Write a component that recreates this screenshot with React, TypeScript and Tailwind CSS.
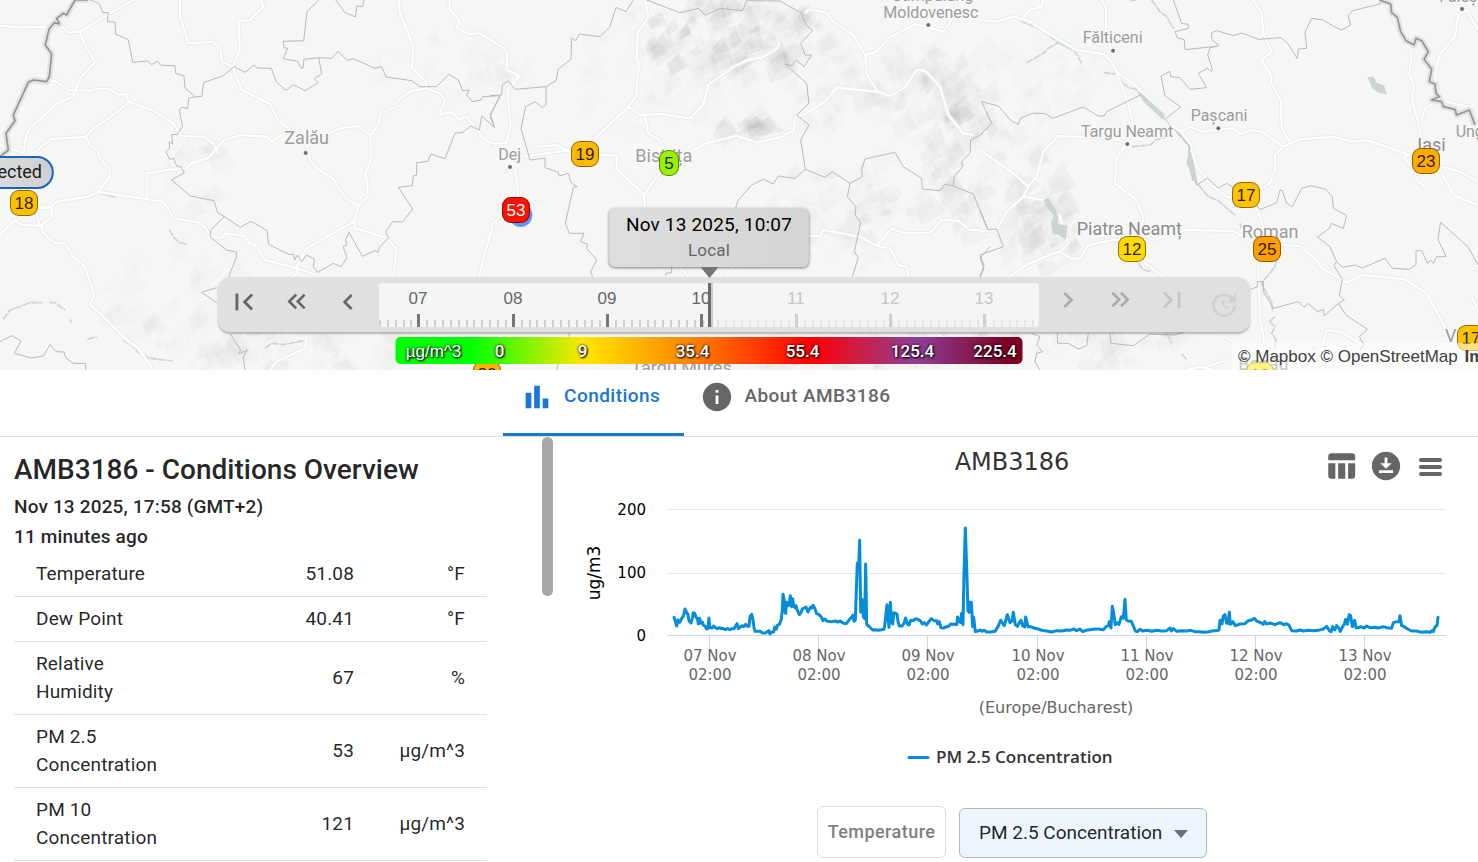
import React, { useState } from "react";
import {
  MdChevronLeft,
  MdChevronRight,
  MdDownloadForOffline,
  MdFirstPage,
  MdInfo,
  MdKeyboardDoubleArrowLeft,
  MdKeyboardDoubleArrowRight,
  MdLastPage,
  MdTableChart,
  MdUpdate,
} from "react-icons/md";

const MAP_W = 1478;

// Map tiles use three units per pixel, each tile is 1470 units wide
const TILES = [
  {
    x: 0,
    roads: [
      "M0 78L60 82 148 80 180 75 205 98 240 94 300 58 400 0",
      "M240 94L252 130 285 185 240 235 218 290 170 312 100 375 80 400 70 460 0 435",
      "M145 245L165 243 205 270 270 272 290 266 330 268 355 285 378 282 385 305 455 330 520 370 545 408 610 410 640 430 655 462",
      "M385 308L340 345 280 385 258 410 155 417 100 460",
      "M258 410L270 435 293 452 300 475 330 510 330 530 295 575 262 590 170 605 155 620 120 620",
      "M295 575L440 598 490 605 522 655 600 668 640 710 665 715 675 700 735 708 750 732 765 735 795 780 893 805 950 825",
      "M440 598L440 520 500 510 560 505 570 492 625 474 670 422 720 405 800 410 815 425 870 390",
      "M540 0L540 45 565 130 640 125 662 150 665 185 698 200 720 150 715 62 750 60 790 20 785 0",
      "M698 200L725 270 810 312 835 360 920 430 930 480 945 500 965 515 1000 535 1020 570 1040 595 1075 618 1105 588 1097 515 1112 485 1112 405 1070 378 1020 385 970 408",
      "M1112 405L1135 375 1140 340 1185 322 1190 303 1235 272 1280 265 1320 280 1335 300 1318 345 1355 335 1378 358 1400 350 1450 415 1490 440",
      "M1195 0L1200 40 1240 140 1236 205 1278 245 1280 265",
      "M1348 0L1350 30 1378 60 1370 85 1410 103 1440 100 1500 138",
      "M1075 618L1062 665 1065 685 1160 713 1190 748 1180 830",
      "M1062 665L920 745 890 800 892 820 870 835",
      "M0 705L45 660 65 675 125 678 130 700 165 730 195 730 220 770 255 800 283 885 270 915 300 940 380 1020 415 1045 460 1110",
      "M120 625L155 625 155 650 120 680 105 625",
      "M1500 665L1480 672 1452 770 1435 840",
      "M920 1010L915 1045 830 1085 810 1110",
    ],
    borders: [
      "M270 0L297 10 308 37 325 38 322 65 345 66 347 103 385 119 398 187 443 183 455 194 472 184 483 196 525 197 527 220 552 228 555 264 586 290 566 295 563 325 545 322 538 332 548 380 532 403 515 404 518 432 507 425 509 445 498 455 508 477 522 476 530 498 543 500 553 519 514 540 572 588 642 602 653 638 673 650 721 682 753 664 782 680 801 692 806 733 868 764 880 762 884 780 892 765 905 785 920 765 943 777 940 800 953 817 1000 790 1023 800 1041 773 1029 740 1040 735 1037 718 1047 697 1087 769 1125 752 1133 757 1140 740 1165 714 1157 695 1178 665 1208 666 1238 627 1195 562 1237 557 1240 527 1250 525 1250 488 1283 484 1293 462 1335 476 1365 400 1388 397 1413 378 1438 390 1445 348 1483 382 1472 345 1500 287",
      "M586 290L605 290 611 248 670 227 703 200 735 217 763 195 770 204 814 205 829 246 858 271 880 254 915 272 955 248 943 235 965 222 956 173 912 178 909 205 902 203 893 184 849 176 863 145 852 143 849 124 911 122 921 36 955 0",
      "M956 173L995 175 1014 154 1042 181 1060 176 1125 205 1145 200 1158 231 1235 242 1260 260 1309 260 1347 223 1375 240 1388 272 1408 270 1400 285 1418 305 1443 300 1448 290 1500 287",
      "M1007 0L1035 38 1067 51 1070 18 1088 20 1092 0",
      "M673 650L632 690 632 713 680 750 710 756 708 775 685 832",
      "M650 863L605 877 650 908",
      "M690 1000L722 1050 716 1062 742 1050 730 1070 735 1110",
      "M0 1025L35 1007 63 1023 43 1060 95 1074 130 1068 150 1034 168 1055 192 1056 197 1073 220 1090 257 1090 257 1110",
    ],
    country: "M265 0L225 0 200 45 190 40 170 55 178 72 163 68 147 88 136 135 155 162 148 230 140 245 100 240 85 247 40 345 45 362 18 400 25 450 0 470",
    water: [
      "M10 958L30 930 60 920 90 908 128 908M148 908L165 908 195 930M210 958L214 968",
      "M508 688L520 710 538 728 563 733",
      "M368 1020L400 1040 415 1058 450 1075 518 1083",
      "M262 1018L290 1010M795 1045L815 1030 850 1034 920 1020",
      "M298 580L348 592",
    ],
    labels: [{ text: "Zalău", x: 853, y: 433 }],
    dots: [[917, 459]],
  },
  {
    x: 1470,
    roads: [
      "M0 118L50 150 52 210 88 228 52 270 62 370 50 430 0 430",
      "M465 0L475 50 443 100 440 180 447 190 438 290 415 320 450 345 510 342 600 355 640 315 655 255 735 198 780 178 815 173 862 145 868 125",
      "M415 320L320 410 300 440 100 470M150 440L200 435 250 460 380 467 380 505 462 585 465 630M462 585L500 530 550 480 650 430 740 407 800 428 870 412 912 392 915 350 945 343 1005 305 1040 263 1165 275 1200 288 1245 262 1280 210 1305 212 1350 260 1375 345 1420 400 1450 405",
      "M465 345L475 400 510 420 525 460",
      "M945 40L955 28 1010 38 1030 65 1090 105 1125 165 1160 155 1195 115 1275 72 1360 95 1385 60 1400 20",
      "M1125 165L1130 220 1165 280",
      "M955 708L990 708 1000 690 1110 710 1160 738 1205 685 1245 700 1320 698 1355 660 1405 662 1440 690 1470 690",
      "M1160 738L1200 745 1225 795 1250 800 1255 830",
      "M75 500L85 590M0 680L20 660 60 620",
      "M565 795L595 830M730 795L705 832M450 1000L465 1010M640 1010L652 1000",
      "M1200 1010L1130 1040M1340 1000L1370 1020",
    ],
    borders: [
      "M430 0L408 35 378 22 360 80 330 110 268 102 258 122 245 114 243 178 205 207 198 242 168 260 168 315 157 323 136 305 107 320 93 385 120 480 165 474 165 503 205 517 207 528 235 520 243 548 262 560 250 562 226 670 238 700 282 700 272 725 293 733 290 745 320 780 302 815 308 830",
      "M168 260L75 268 55 243 37 254 35 285 0 287",
      "M0 350L14 382M0 345L30 290",
      "M470 0L570 38 625 25 646 46 690 25 758 32 770 2 870 3 935 40 948 75 968 92 932 130 945 165 965 165 942 200 918 180 905 197 885 192 950 250 957 310 920 345 957 375 932 420 946 508 915 535 865 528 850 552 820 538 785 555 743 603 737 625",
      "M946 508L1005 532 1027 515 1080 550 1072 590 1098 620 1095 645 1112 667 1093 755 1105 773 1087 830",
      "M1080 550L1117 530 1115 508 1125 477 1215 457 1240 500 1295 535 1297 567 1350 572 1365 552 1390 558 1450 582 1495 695",
      "M1390 558L1393 530 1418 500 1415 485 1440 460 1442 420 1480 400M1500 740L1470 775 1482 805 1470 832",
      "M545 800L545 818 528 820 528 830M240 998L235 1010M200 1110L205 1090",
    ],
    country: "",
    water: ["M1188 283L1200 283"],
    labels: [
      { text: "Dej", x: 25, y: 480, small: true },
      { text: "Bistrița", x: 436, y: 487 },
      { text: "Moldovenesc", x: 1180, y: 54, small: true },
      { text: "Câmpulung", x: 1205, y: 2, small: true },
      { text: "Târgu Mureș", x: 424, y: 1122 },
    ],
    dots: [[60, 501], [1315, 75]],
  },
  {
    x: 2940,
    roads: [
      "M0 60L50 65 100 50 150 65 205 100 290 150 370 162 395 185 410 215 470 260 520 310 560 365 605 395 630 430 650 500 700 560 740 590 800 600 830 625 850 680 835 800 840 950 855 1040",
      "M130 55L145 30 185 20 190 0M365 0L378 25 378 95 398 165",
      "M410 220L435 285 450 330 460 380 440 430 410 475 405 550 470 600 490 650 485 700 520 720 620 690 760 693 830 730 960 738 1010 780 1020 800 1100 848 1150 825 1275 838 1340 880 1400 990",
      "M440 430L400 415 235 408 190 455 170 530 145 560 100 520 0 450M145 560L130 590 80 635 50 690 0 695",
      "M130 590L190 600 240 650 255 700 265 730 240 755 275 777 300 775 325 735 400 720 470 722",
      "M240 755L200 768 130 800 90 830M470 770L550 832",
      "M605 395L630 380 665 395 760 385 780 402 815 390 845 395 910 440 960 418 1060 410 1120 425 1160 420 1290 465",
      "M820 0L845 40 850 100 875 155 845 180 875 230 872 245 902 300 905 380 920 410 932 430",
      "M910 440L885 465 885 510 870 550 835 570 810 600",
      "M1215 0L1270 120 1295 155 1288 220 1302 260 1296 300 1320 390 1325 430M1325 360L1335 325 1380 300 1465 320",
      "M1380 300L1365 220 1378 165 1425 110 1435 45 1460 30 1494 90",
      "M1290 465L1270 470 1305 515 1308 540 1335 560M1385 500L1440 515 1494 545M1385 520L1420 585 1494 615",
      "M620 1110L660 1100 700 1110M680 1100L740 1080M730 1010L760 1025M960 1090L1030 1030 1040 990 1080 995 1160 1040M1475 890L1494 930",
    ],
    borders: [
      "M0 405L35 370 5 305 55 318 95 364 115 373 122 354 157 340 193 340 218 355 310 321 355 348 373 348 380 335 480 285 555 358 602 321 555 287 543 228 570 214 572 230 600 233 630 268 680 263 655 220 682 205 695 215 697 207 683 165 690 143 717 137 695 118 695 98 710 92 760 107 785 99 835 118 903 113 925 132 928 137 952 176 955 147 980 145 975 97 995 55 1030 60 1057 77 1085 90 1112 75 1104 47 1118 32 1207 10",
      "M580 0L605 70 625 73 625 85 585 95 592 114 613 119 615 149 710 139",
      "M555 358L630 440 622 490 650 555 682 535 715 565 740 550 760 562 842 628 890 608 900 570 907 572 920 610 937 620 965 565 992 557 1038 568 1057 590 1060 625 1100 646 1090 685 1055 670 1048 685 1012 711 1050 740 1070 785 1087 802 1125 795 1147 804 1215 775 1237 805 1287 808 1308 795 1308 752 1325 752 1343 790 1352 780 1360 790 1370 770 1398 770 1374 718 1382 667 1465 742 1494 795",
      "M1070 785L1062 797 1087 838 1078 885 1093 900 1075 910 1033 948 1030 928 1012 935 985 910 972 922 955 905 880 925 850 875 850 845 833 845 833 860 812 868",
      "M1075 910L1098 945 1162 988 1138 1010 1152 1035 1140 1050M0 630L25 690 50 687 70 740 0 765 12 795 0 830",
      "M155 1000L180 1010 170 1035 187 1055 170 1060 165 1085 180 1110M232 1000L233 1030 265 1030 295 1047 320 1037 325 1000M390 1000L393 1030 460 1037 510 1002 580 1005 610 998",
    ],
    country: "M1198 0L1232 12 1235 38 1252 52 1262 95 1278 122 1302 135 1308 115 1325 122 1345 155 1332 178 1355 208 1348 245 1365 252 1368 280 1378 290 1355 300 1385 305 1390 320 1425 328 1430 345 1468 330 1485 375",
    water: [
      "M120 62L185 90 235 128 205 145 190 160 140 188M235 128L285 155 305 190M372 218L408 222M412 235L445 262 468 268 500 310 555 358",
      "M592 395L628 440 640 500 648 545 685 590 712 600 768 648M455 440L510 435 530 418 570 408",
      "M515 0L540 35 558 48 582 88M450 2L468 0M475 790L490 810 515 815M780 670L785 685M890 780L885 800 860 830 845 850 860 880 875 905 878 935M885 950L868 965 885 980 875 1000 888 1020 885 1045",
      "M560 1000L575 1030M605 1062L622 1080M1000 1040L1010 1050",
    ],
    labels: [
      { text: "Fălticeni", x: 308, y: 130, small: true },
      { text: "Fălești", x: 1378, y: 5, small: true },
      { text: "Pașcani", x: 632, y: 364, small: true },
      { text: "Targu Neamt", x: 303, y: 411, small: true },
      { text: "Ungheni", x: 1427, y: 411, small: true },
      { text: "Iași", x: 1312, y: 452, strong: true },
      { text: "Piatra Neamț", x: 290, y: 706, strong: true },
      { text: "Roman", x: 785, y: 714 },
      { text: "Vaslui", x: 1395, y: 1025 },
      { text: "Bacău", x: 775, y: 1110, strong: true },
    ],
    dots: [[399, 152], [715, 385], [442, 432], [1446, 27]],
  },
];

// Hilly areas: centre, spread, number of facets, darkness
const HILLS = [
  [2170, 110, 290, 110, 80, 0.026],
  [2300, 260, 420, 130, 60, 0.01],
  [1900, 220, 230, 200, 35, 0.009],
  [2200, 385, 80, 22, 12, 0.026],
  [2500, 650, 230, 160, 60, 0.014],
  [2700, 300, 260, 180, 60, 0.013],
  [2820, 250, 80, 110, 20, 0.022],
  [2950, 560, 230, 210, 70, 0.018],
  [3120, 670, 100, 130, 30, 0.022],
  [3080, 260, 280, 170, 40, 0.009],
  [3100, 1020, 420, 90, 60, 0.016],
  [550, 920, 280, 180, 50, 0.01],
  [900, 1040, 330, 80, 50, 0.014],
  [560, 520, 90, 120, 14, 0.011],
  [1330, 190, 230, 120, 22, 0.01],
  [2500, 1050, 300, 60, 36, 0.018],
];

const seeded = (seed: number) => () => {
  seed = (seed * 16807) % 2147483647;
  return seed / 2147483647;
};

const buildFacets = () => {
  const rand = seeded(4211);
  const facets: { points: string; opacity: number }[] = [];
  HILLS.forEach(([cx, cy, rx, ry, count, dark]) => {
    for (let i = 0; i < count; i++) {
      const angle = rand() * Math.PI * 2;
      const dist = Math.sqrt(rand());
      const x = cx + Math.cos(angle) * rx * dist;
      const y = cy + Math.sin(angle) * ry * dist;
      const size = 28 + rand() * 45;
      const points = [
        [x, y],
        [x + size * 0.7, y - size * (0.2 + rand() * 0.8)],
        [x + size * (0.9 + rand() * 0.5), y + size * 0.2],
        [x + size * 0.2, y + size * (0.3 + rand() * 0.7)],
      ];
      facets.push({
        points: points.map((p) => p.map(Math.round).join(",")).join(" "),
        opacity: dark * (0.5 + rand()),
      });
    }
  });
  return facets;
};

const FACETS = buildFacets();

const PINS = [
  { value: 18, x: 24, y: 203, style: "w-7 bg-[#ffc000] text-black/85" },
  { value: 19, x: 585, y: 154, style: "w-7 bg-[#ffb900] text-black/85" },
  { value: 5, x: 669, y: 163, style: "w-5 bg-[#99f000] text-black/85" },
  { value: 53, x: 516, y: 210, style: "w-7 bg-[#ff1000] text-white" },
  { value: 12, x: 1132, y: 249, style: "w-7 bg-[#ffd900] text-black/85" },
  { value: 17, x: 1246, y: 195, style: "w-7 bg-[#ffc300] text-black/85" },
  { value: 25, x: 1267, y: 249, style: "w-7 bg-[#ffa000] text-black/85" },
  { value: 23, x: 1426, y: 161, style: "w-7 bg-[#ffab00] text-black/85" },
  { value: 17, x: 1471, y: 338, style: "w-7 bg-[#ffc300] text-black/85" },
  { value: 20, x: 487, y: 374, style: "w-7 bg-[#ffb300] text-black/85" },
  { value: 10, x: 1260, y: 375, style: "w-7 bg-[#ffe400] text-black/85" },
];

const LEGEND = [
  { label: "µg/m^3", style: "w-[76px] font-['Liberation_Sans']" },
  { label: "0", style: "w-14" },
  { label: "9", style: "w-[110px]" },
  { label: "35.4", style: "w-[110px]" },
  { label: "55.4", style: "w-[110px]" },
  { label: "125.4", style: "w-[110px]" },
  { label: "225.4", style: "w-[55px]" },
];

const READINGS = [
  { name: "Temperature", value: "51.08", unit: "°F" },
  { name: "Dew Point", value: "40.41", unit: "°F" },
  { name: "Relative Humidity", value: "67", unit: "%" },
  { name: "PM 2.5 Concentration", value: "53", unit: "µg/m^3" },
  { name: "PM 10 Concentration", value: "121", unit: "µg/m^3" },
];

const DAYS = ["07 Nov", "08 Nov", "09 Nov", "10 Nov", "11 Nov", "12 Nov", "13 Nov"];

// PM 2.5 series, drawn at three units per pixel
const SERIES =
  "312,532 316,543 320,558 324,540 329,547 334,538 340,528 345,507 350,518 354,524 357,542 363,549 367,535 370,518 374,520 378,532 382,534 385,552 389,535 393,550 397,546 401,556 405,558 410,567 414,566 417,534 419,562 426,564 431,558 436,563 442,566 448,563 454,566 460,565 465,569 472,566 480,569 486,566 492,566 497,558 501,551 505,566 511,561 516,557 521,560 527,553 532,559 537,559 540,530 545,523 548,534 552,562 555,574 570,574 578,579 586,579 592,575 596,572 600,582 604,577 611,576 614,561 619,567 622,556 629,552 634,538 637,508 639,463 642,475 643,512 647,520 649,486 655,497 658,490 661,467 665,500 668,476 671,498 676,504 678,497 682,511 688,524 693,518 697,507 703,504 708,501 714,516 721,502 725,504 729,496 734,504 740,521 746,523 753,530 759,542 765,537 772,544 785,545 796,543 803,546 811,543 817,548 824,551 830,550 837,540 846,530 849,525 852,544 856,540 859,450 862,370 866,380 869,301 872,516 876,478 880,530 884,536 887,372 890,553 896,558 902,564 908,570 915,569 925,571 935,569 942,568 945,550 948,520 951,494 954,530 957,562 961,487 964,540 968,552 972,518 981,522 984,545 988,558 996,558 1002,550 1007,534 1012,552 1017,555 1022,541 1030,542 1037,536 1045,539 1052,543 1057,552 1063,548 1069,555 1076,546 1084,536 1092,542 1100,542 1103,552 1108,545 1113,563 1120,564 1128,561 1137,558 1142,552 1152,553 1160,554 1163,531 1168,545 1172,548 1175,520 1179,554 1182,400 1186,264 1190,380 1194,512 1197,517 1200,487 1204,487 1208,560 1211,532 1216,575 1224,573 1230,570 1237,574 1242,571 1250,576 1262,576 1275,574 1284,560 1292,541 1303,557 1312,524 1320,548 1326,543 1330,517 1336,554 1342,559 1348,548 1353,541 1358,557 1364,561 1367,531 1374,560 1382,560 1392,564 1405,567 1415,571 1430,573 1445,576 1460,572 1475,573 1490,570 1500,571 1512,567 1520,572 1530,567 1538,575 1548,571 1560,569 1575,567 1586,567 1600,569 1608,560 1615,557 1618,545 1623,564 1627,499 1631,520 1636,554 1642,548 1647,553 1654,530 1660,535 1665,478 1669,540 1674,543 1684,544 1690,558 1696,573 1702,575 1710,568 1718,573 1730,571 1745,574 1760,571 1775,573 1790,572 1800,564 1804,573 1810,566 1820,574 1835,572 1850,573 1862,571 1875,575 1890,575 1900,577 1915,575 1930,572 1940,572 1947,570 1950,541 1956,552 1960,528 1965,524 1970,550 1974,550 1978,517 1981,553 1989,545 1996,557 2010,552 2025,551 2035,542 2045,540 2053,535 2060,543 2070,547 2080,553 2084,545 2090,552 2100,549 2115,554 2130,548 2142,554 2150,551 2157,556 2165,572 2180,573 2190,570 2200,573 2215,571 2230,572 2245,571 2260,567 2270,559 2278,572 2283,575 2288,560 2294,570 2300,557 2307,565 2311,574 2318,560 2323,552 2327,538 2332,553 2338,524 2342,527 2347,560 2354,541 2358,563 2365,563 2372,560 2382,564 2390,558 2400,563 2415,562 2425,564 2440,560 2450,563 2465,565 2470,548 2480,545 2487,545 2490,527 2495,557 2503,560 2513,567 2525,573 2540,573 2555,577 2570,575 2580,577 2587,571 2590,575 2594,563 2601,556 2604,532";

const MapPane = () => (
  <div className="absolute inset-0">
    <svg viewBox="0 0 4434 1110" preserveAspectRatio="none" className="h-full w-full" aria-label="Map">
      <rect width="4434" height="1110" fill="#f6f6f4" />
      {FACETS.map((facet, i) => (
        <polygon key={i} points={facet.points} fill="#000" opacity={facet.opacity} />
      ))}
      {TILES.map((tile) => (
        <g key={tile.x} transform={`translate(${tile.x} 0)`} fill="none" strokeLinejoin="round">
          {tile.water.map((d) => (
            <path key={d} d={d} stroke="#cbd3d5" strokeWidth="5" strokeDasharray="22 3" />
          ))}
          <path d={tile.roads.join("")} stroke="#e9edec" strokeWidth="12" />
          <path d={tile.roads.join("")} stroke="#fff" strokeWidth="6" />
          <path d={tile.borders.join("")} stroke="#b9b9b9" strokeWidth="3" />
          <path d={tile.country} stroke="#e2e2e2" strokeWidth="18" />
          <path d={tile.country} stroke="#949494" strokeWidth="5" />
        </g>
      ))}
      <path d="M4102 232l18-2 10 18 22 8 8 26-22-2-20-14z" fill="#cbd3d5" />
      <path d="M3130 600l15-5 28 45 2 32 28 5-5 42-22-15-18-2-5-35 10-20-25-30z" fill="#cbd3d5" />
      <path d="M3420 275l75 70-6 14-60-55zM3565 440l14 40 12 60-14 4-14-60z" fill="#cbd3d5" />
      {TILES.map((tile) => (
        <g key={tile.x} transform={`translate(${tile.x} 0)`} fontFamily="Roboto, sans-serif">
          {tile.dots.map(([x, y]) => (
            <circle key={x} cx={x} cy={y} r="6" fill="#6f6f6f" />
          ))}
          {tile.labels.map((label) => (
            <text
              key={label.text}
              x={label.x}
              y={label.y}
              fontSize={label.small ? 48 : 54}
              fill={label.strong ? "#8a8a8a" : "#9c9c9c"}
              stroke="#f8f8f8"
              strokeWidth="8"
              paintOrder="stroke"
            >
              {label.text}
            </text>
          ))}
        </g>
      ))}
      <ellipse cx="1562" cy="645" rx="35" ry="36" fill="#6495ff" />
    </svg>
    {PINS.map((pin) => (
      <span
        key={`${pin.value}-${pin.x}`}
        className={`absolute flex h-[26px] -translate-x-1/2 -translate-y-1/2 items-center justify-center rounded-[9px] border border-black/45 font-['Liberation_Sans'] text-[17px] leading-none ${pin.style}`}
        style={{ left: `${(pin.x / MAP_W) * 100}%`, top: pin.y }}
      >
        {pin.value}
      </span>
    ))}
    <button className="absolute left-[54px] top-[156px] h-[33px] -translate-x-full rounded-full border-2 border-[#1565c0] bg-linear-to-r from-[#e2e2e2] to-[#cfcfcf] px-2.5 pb-0.5 text-lg leading-none text-black/90">
      Selected
    </button>
    <div className="absolute bottom-0 right-0 h-[27px] w-[246px] overflow-hidden whitespace-nowrap bg-white/50 pl-1.5 font-['Liberation_Sans'] text-[17px] leading-[27px] text-[#404040]">
      <a href="#mapbox">© Mapbox</a> <a href="#osm">© OpenStreetMap</a>{" "}
      <a href="#improve" className="ml-0.5 font-bold">Improve this map</a>
    </div>
  </div>
);

const HOURS = [
  { label: "07", x: 39 },
  { label: "08", x: 134 },
  { label: "09", x: 228 },
  { label: "10", x: 322 },
  { label: "11", x: 417 },
  { label: "12", x: 511 },
  { label: "13", x: 605 },
];

const Ruler = () => (
  <svg viewBox="0 0 660 44" className="h-11 w-[660px] rounded-sm bg-[#f5f5f5]" aria-hidden="true">
    {Array.from({ length: 84 }, (_, i) => Math.round(i * 7.87)).map((x) => (
      <rect key={x} x={x} y="37" width="2" height="7" fill={x < 330 ? "#d0d0d0" : "#e6e6e6"} />
    ))}
    {HOURS.map((hour) => (
      <g key={hour.label} fill={hour.x < 330 ? "#666" : "#c6c6c6"}>
        <rect x={hour.x - 1} y="31" width="3" height="13" fill={hour.x < 330 ? "#777" : "#d0d0d0"} />
        <text x={hour.x} y="21" textAnchor="middle" fontSize="17" fontFamily="Liberation Sans, sans-serif">
          {hour.label}
        </text>
      </g>
    ))}
    <rect x="330" y="0" width="8" height="36" fill="#f5f5f5" />
    <rect x="331" y="0" width="3" height="44" fill="#ccc" />
    <rect x="329" y="0" width="3" height="44" fill="#6b6b6b" />
  </svg>
);

const stepButton = "flex h-11 w-[52px] cursor-pointer items-center justify-center";

const Timeline = () => (
  <div className="absolute inset-x-0 bottom-[38px] flex justify-center pr-2.5">
    <div className="flex h-[55px] items-center rounded-xl bg-[#e0e0e0] shadow-[0_2px_2px_rgba(0,0,0,0.25)]">
      <div className="flex w-[161px] pb-1.5 text-[#666]">
        <button aria-label="First" className={stepButton}><MdFirstPage size={34} /></button>
        <button aria-label="Back one day" className={stepButton}><MdKeyboardDoubleArrowLeft size={31} /></button>
        <button aria-label="Back one hour" className={stepButton}><MdChevronLeft size={32} /></button>
      </div>
      <div className="relative">
        <Ruler />
        <div className="absolute bottom-full left-1/2 flex -translate-x-1/2 flex-col items-center pb-[5px]">
          <div className="w-[199px] rounded-md bg-linear-to-r from-[#dedede] to-[#d4d4d4] py-1 text-center shadow-[0_1px_3px_rgba(0,0,0,0.5)]">
            <p className="text-[19px] leading-[26px] tracking-[0.01em] text-black">Nov 13 2025, 10:07</p>
            <p className="text-[17px] leading-[25px] tracking-[0.01em] text-[#666]">Local</p>
          </div>
          <svg viewBox="0 0 18 11" className="h-[11px] w-[18px]" aria-hidden="true">
            <path d="M0 0h18L9 11z" fill="#757575" />
          </svg>
        </div>
        <div className="absolute left-1/2 top-full -translate-x-1/2 pt-2.5">
          <div className="flex h-[27px] items-center rounded-[5px] bg-[linear-gradient(90deg,#00ff00_0%,#00ff00_12%,#ffe600_30%,#ff7e00_48%,#ff0000_66%,#8f3f97_83%,#7e0023_98%)] pt-[3px] text-center text-[17px] font-medium leading-none text-white [text-shadow:0_0_3px_#000,1px_1px_2px_#000]">
            {LEGEND.map((stop) => (
              <span key={stop.label} className={stop.style}>{stop.label}</span>
            ))}
          </div>
        </div>
      </div>
      <div className="flex w-[211px] pb-2.5 pl-[3px] text-[#a9a9a9]">
        <button aria-label="Forward one hour" className={stepButton}><MdChevronRight size={32} /></button>
        <button aria-label="Forward one day" className={stepButton}><MdKeyboardDoubleArrowRight size={31} /></button>
        <button aria-label="Last" disabled className={`${stepButton} text-[#c6c6c6]`}><MdLastPage size={34} /></button>
        <button aria-label="Now" disabled className={`${stepButton} pt-2.5 text-[#d0d0d0]`}><MdUpdate size={32} /></button>
      </div>
    </div>
  </div>
);

const Tabs = () => (
  <nav className="flex h-[67px] items-stretch border-b border-[#e0e0e0] pl-[503px] text-[19px] font-medium tracking-wide">
    <button className="flex items-center gap-2.5 border-b-3 border-[#1976d2] pb-2.5 pl-[17px] pr-6 text-[#1976d2]">
      <svg viewBox="0 0 24 24" className="size-[34px]" fill="currentColor" aria-hidden="true">
        <path d="M4 9h4v11H4zM16 13h4v7h-4zM10 4h4v16h-4z" />
      </svg>
      Conditions
    </button>
    <button className="flex items-center gap-2.5 border-b-3 border-transparent pb-2.5 pl-4 pr-5 text-[#666]">
      <MdInfo size={34} />
      About AMB3186
    </button>
  </nav>
);

const Overview = () => (
  <section className="relative w-[553px] shrink-0 pl-3.5 pr-[66px] pt-[15px] tracking-[0.01em] text-black/87">
    <h2 className="text-[28px] font-medium leading-9 tracking-normal">AMB3186 - Conditions Overview</h2>
    <p className="mt-1 text-[19px] font-medium leading-[30px]">Nov 13 2025, 17:58 (GMT+2)</p>
    <p className="text-[19px] font-medium leading-[30px]">11 minutes ago</p>
    <table className="w-full table-fixed text-[19px] leading-7">
      <tbody>
        {READINGS.map((reading) => (
          <tr key={reading.name} className="border-b border-[#e0e0e0]">
            <th scope="row" className="w-[155px] py-2 pl-[22px] text-left font-normal">{reading.name}</th>
            <td className="py-2 pr-[22px] text-right">{reading.value}</td>
            <td className="w-[111px] py-2 pr-[22px] text-right">{reading.unit}</td>
          </tr>
        ))}
      </tbody>
    </table>
    <div className="absolute right-0 top-0 h-[159px] w-[11px] rounded-full bg-[#a8a8a8]" />
  </section>
);

const Chart = () => (
  <svg viewBox="0 0 898 345" className="block w-full" fontFamily="DejaVu Sans, sans-serif" role="img" aria-label="AMB3186 PM 2.5 Concentration">
    <text x="449" y="33" textAnchor="middle" fontSize="24" fill="#333">AMB3186</text>
    <path d="M104 72.5H883M104 136.5H883" stroke="#e6e6e6" />
    <path d="M104 198.5H883" stroke="#ccd6eb" />
    {["200", "100", "0"].map((label, i) => (
      <text key={label} x="83" y={78 + i * 63} textAnchor="end" fontSize="15" fill="#000">{label}</text>
    ))}
    <text transform="translate(37 136) rotate(-90)" textAnchor="middle" fontSize="17" fill="#000">ug/m3</text>
    {DAYS.map((day, i) => {
      const x = 147 + Math.round(i * 109.2);
      return (
        <g key={day} textAnchor="middle" fontSize="15" fill="#666">
          <path d={`M${x - 0.5} 199v13`} stroke="#ccd6eb" />
          <text x={x} y="224">{day}</text>
          <text x={x} y="243">02:00</text>
        </g>
      );
    })}
    <g transform="translate(7 3) scale(0.33333)">
      <polyline points={SERIES} fill="none" stroke="#058dd9" strokeWidth="9" strokeLinejoin="round" strokeLinecap="round" />
    </g>
    <text x="493" y="276" textAnchor="middle" fontSize="16" fill="#666">(Europe/Bucharest)</text>
    <path d="M346 320.5h19" stroke="#058dd9" strokeWidth="3" strokeLinecap="round" />
    <text x="373" y="326" fontSize="17" fontWeight="600" fontFamily="Open Sans, sans-serif" fill="#333">PM 2.5 Concentration</text>
  </svg>
);

const App: React.FC = () => {
  const [metric, setMetric] = useState("PM 2.5 Concentration");

  return (
    <div className="min-h-screen w-full overflow-hidden bg-white font-['Roboto',sans-serif]">
      {/* Map with time slider */}
      <div className="relative h-[370px] w-full overflow-hidden">
        <MapPane />
        <Timeline />
      </div>

      <Tabs />

      <main className="flex">
        <Overview />

        {/* Chart panel */}
        <section className="relative min-w-0 flex-1 pl-2.5 pr-[17px]">
          <Chart />
          <div className="absolute right-[30px] top-3 flex items-center gap-[11px] text-[#666]">
            <button aria-label="Table view"><MdTableChart size={34} /></button>
            <button aria-label="Download"><MdDownloadForOffline size={34} /></button>
            <button aria-label="Chart menu">
              <svg viewBox="0 0 34 34" className="size-[34px]" aria-hidden="true">
                <path d="M7 11h19M7 18h19M7 25h19" stroke="currentColor" strokeWidth="4" strokeLinecap="round" />
              </svg>
            </button>
          </div>
          <div className="flex items-end justify-center gap-[13px] pb-1 pt-6">
            <button className="h-[52px] w-[129px] rounded-md border border-[#dcdcdc] text-lg font-medium tracking-wide text-[#808080]">
              Temperature
            </button>
            <div className="relative">
              <select
                aria-label="Chart metric"
                value={metric}
                onChange={(e) => setMetric(e.target.value)}
                className="h-[50px] w-[248px] appearance-none rounded-md border border-[#b0b8c4] bg-[#edf4fc] pl-[19px] text-[19px] text-black/87"
              >
                <option>PM 2.5 Concentration</option>
                <option>PM 10 Concentration</option>
              </select>
              <svg viewBox="0 0 14 8" className="pointer-events-none absolute right-[19px] top-[22px] h-2 w-3.5" aria-hidden="true">
                <path d="M0 0h14L7 8z" fill="#6b7075" />
              </svg>
            </div>
          </div>
        </section>
      </main>
    </div>
  );
};

export default App;
